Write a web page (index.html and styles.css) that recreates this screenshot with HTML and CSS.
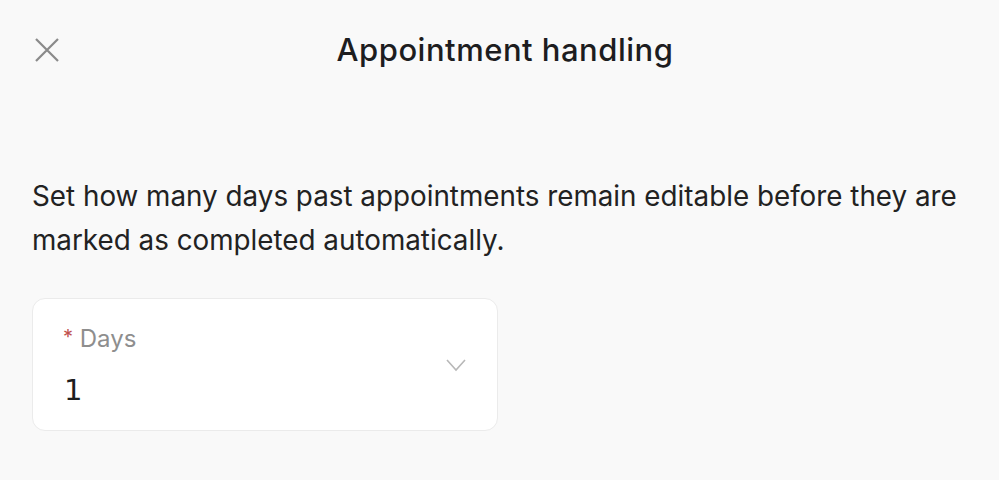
FILE: index.html
```html
<!DOCTYPE html>
<html lang="en">
<head>
<meta charset="utf-8">
<title>Appointment handling</title>
<link rel="stylesheet" href="styles.css">
</head>
<body>
<div class="screen">
  <header class="topbar">
    <button class="close" aria-label="Close">
      <svg width="24" height="24" viewBox="0 0 24 24" fill="none" stroke="#8a8a8a" stroke-width="2.2" stroke-linecap="butt">
        <path d="M1 1 L23 23 M23 1 L1 23"/>
      </svg>
    </button>
    <h1 class="title">Appointment handling</h1>
    <span class="spacer"></span>
  </header>
  <main class="content">
    <p class="desc">Set how many days past appointments remain editable before they are marked as completed automatically.</p>
    <div class="field">
      <div class="field-text">
        <div class="label"><span class="req">*</span> Days</div>
        <div class="value">1</div>
      </div>
      <svg class="chevron" width="20" height="14" viewBox="0 0 20 14" fill="none" stroke="#b8b8b8" stroke-width="1.6">
        <path d="M1 2 L10 12 L19 2"/>
      </svg>
    </div>
  </main>
</div>
</body>
</html>
```

FILE: styles.css
```css
* { box-sizing: border-box; }
html, body {
  margin: 0;
  padding: 0;
  background: #f9f9f9;
}
body {
  font-family: Inter, "Noto Sans", "Liberation Sans", sans-serif;
  color: #1d1d1f;
}
.screen {
  width: 999px;
  height: 480px;
  overflow: hidden;
}
.topbar {
  display: flex;
  align-items: center;
  height: 100px;
  padding: 0 24px 2px 35px;
}
.close {
  width: 24px;
  height: 24px;
  margin-top: 2px;
  padding: 0;
  border: 0;
  background: none;
  display: flex;
}
.title {
  flex: 1;
  margin: 0;
  text-align: center;
  font-size: 31px;
  font-weight: 500;
  letter-spacing: 0.5px;
  color: #1d1d1f;
}
.spacer { width: 24px; }
.content {
  padding: 74px 32px 0 32px;
}
.desc {
  margin: 0;
  font-size: 27.8px;
  line-height: 44px;
  color: #222;
}
.field {
  margin-top: 36px;
  width: 466px;
  height: 133px;
  background: #fff;
  border: 1.5px solid #ebebeb;
  border-radius: 13px;
  display: flex;
  align-items: center;
  padding: 0 31px 0 30px;
}
.field-text {
  flex: 1;
  align-self: stretch;
  display: flex;
  flex-direction: column;
  padding-top: 21px;
}
.label {
  font-size: 24px;
  color: #8e8e8e;
  line-height: 34px;
}
.req {
  color: #c0504f;
  font-size: 20px;
  vertical-align: 3px;
}
.value {
  margin-top: 7px;
  padding-left: 1px;
  font-family: "DejaVu Sans", Inter, sans-serif;
  font-size: 29px;
  color: #1d1d1f;
  line-height: 54px;
}
.chevron {
  display: block;
}
```
